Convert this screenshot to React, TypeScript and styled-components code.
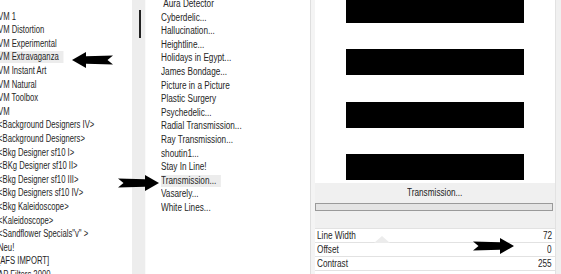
import React from 'react';
import styled, { createGlobalStyle } from 'styled-components';

const Global = createGlobalStyle`
  html, body { margin: 0; padding: 0; background: #fff; }
  body {
    width: 561px; height: 274px; overflow: hidden;
    font-family: "Liberation Sans", Arial, sans-serif;
  }
`;

const Screen = styled.div`
  position: relative;
  width: 561px;
  height: 274px;
  overflow: hidden;
  display: flex;
  font-size: 10px;
  color: #262626;
`;

const Narrow = styled.span<{ $origin?: string; $scale?: number }>`
  display: inline-block;
  white-space: nowrap;
  transform: scaleX(${(p) => p.$scale ?? 0.82});
  transform-origin: ${(p) => p.$origin || 'left'} center;
`;

const ListPane = styled.div<{ $w: number }>`
  width: ${(p) => p.$w}px;
  flex: none;
  background: #fff;
  overflow: hidden;
`;

const List = styled.div<{ $x: number; $y: number }>`
  display: flex;
  flex-direction: column;
  margin-left: ${(p) => p.$x}px;
  margin-top: ${(p) => p.$y}px;
`;

const Item = styled.div`
  height: 13.6px;
  display: flex;
  align-items: center;
  white-space: nowrap;
`;

const Label = styled(Narrow)<{ $sel?: boolean }>`
  line-height: 12px;
  padding-right: 6px;
  background: ${(p) => (p.$sel ? '#ececec' : 'transparent')};
`;

const Track = styled.div`
  width: 14px;
  flex: none;
  background: #ededed;
  display: flex;
  padding: 10px 0 0 7px;
  box-sizing: border-box;
  border-right: 1px solid #fafafa;
  margin-right: 2px;
`;

const Thumb = styled.div`
  width: 1.5px;
  height: 28px;
  background: #222;
`;

const Divider = styled.div`
  width: 4px;
  flex: none;
  background: #f4f4f4;
  border-left: 1px solid #dedede;
`;

const RightPanel = styled.div`
  width: 240px;
  flex: none;
  display: flex;
  flex-direction: column;
  background: #f0f0f0;
`;

const Preview = styled.div`
  height: 183px;
  flex: none;
  background: #fff;
  overflow: hidden;
  display: flex;
  justify-content: center;
`;

const Bars = styled.div`
  display: flex;
  flex-direction: column;
  gap: 26.6px;
  margin-top: -3.4px;
`;

const Bar = styled.div`
  width: 178px;
  height: 26px;
  flex: none;
  background: #000;
`;

const Title = styled.div`
  height: 18px;
  flex: none;
  display: flex;
  align-items: center;
  justify-content: center;
  color: #222;
`;

const Progress = styled.div`
  height: 6px;
  flex: none;
  margin: 2px 2px 0 0;
  border: 1px solid #9a9a9a;
  background: #e4e4e4;
`;

const Spacer = styled.div`
  height: 16.7px;
  flex: none;
`;

const Table = styled.div`
  position: relative;
  display: flex;
  flex-direction: column;
  background: #fff;
  flex: 1;
  min-height: 0;
  border-top: 1px solid #e2e2e2;
`;

const Row = styled.div`
  height: 14.2px;
  flex: none;
  display: flex;
  align-items: center;
  justify-content: space-between;
  padding: 0 3px 0 2px;
  border-bottom: 1px solid #e2e2e2;
  box-sizing: border-box;
`;

const Ghost = styled.div`
  position: absolute;
  left: 59px;
  top: 7px;
  width: 0;
  height: 0;
  border-left: 8px solid transparent;
  border-right: 8px solid transparent;
  border-bottom: 7px solid #ececec;
`;

const EdgeRight = styled.div`
  flex: 1;
  background: #f0f0f0;
  border-left: 1px solid #e2e2e2;
`;

const ArrowSvg = styled.svg<{ $x: number; $y: number; $flip?: boolean }>`
  position: absolute;
  left: ${(p) => p.$x}px;
  top: ${(p) => p.$y}px;
  width: 41px;
  height: 16px;
  transform: ${(p) => (p.$flip ? 'scaleX(-1)' : 'none')};
`;

const Arrow = ({ x, y, flip }: { x: number; y: number; flip?: boolean }) => (
  <ArrowSvg $x={x} $y={y} $flip={flip} viewBox="0 0 41 16">
    <path d="M0 3.6 L27 4.3 L27 0 L41 8 L27 16 L27 11.7 L0 12.4 L5.5 8 Z" fill="#000" />
  </ArrowSvg>
);

const leftItems = [
  '',
  'VM 1',
  'VM Distortion',
  'VM Experimental',
  'VM Extravaganza',
  'VM Instant Art',
  'VM Natural',
  'VM Toolbox',
  'VM',
  '<Background Designers IV>',
  '<Background Designers>',
  '<Bkg Designer sf10 I>',
  '<BKg Designer sf10 II>',
  '<Bkg Designer sf10 III>',
  '<Bkg Designers sf10 IV>',
  '<Bkg Kaleidoscope>',
  '<Kaleidoscope>',
  '<Sandflower Specials"v" >',
  'Neu!',
  '[AFS IMPORT]',
  'AP Filters 2000',
];

const midItems = [
  '\u00a0Aura Detector',
  'Cyberdelic...',
  'Hallucination...',
  'Heightline...',
  'Holidays in Egypt...',
  'James Bondage...',
  'Picture in a Picture',
  'Plastic Surgery',
  'Psychedelic...',
  'Radial Transmission...',
  'Ray Transmission...',
  'shoutin1...',
  'Stay In Line!',
  'Transmission...',
  'Vasarely...',
  'White Lines...',
];

const params = [
  ['Line Width', '72'],
  ['Offset', '0'],
  ['Contrast', '255'],
];

export default function App() {
  return (
    <>
      <Global />
      <Screen>
        <ListPane $w={132}>
          <List $x={-2} $y={-3.7}>
            {leftItems.map((t, i) => (
              <Item key={i}>
                <Label $scale={0.77} $sel={t === 'VM Extravaganza'}>
                  {t}
                </Label>
              </Item>
            ))}
          </List>
        </ListPane>
        <Track>
          <Thumb />
        </Track>
        <ListPane $w={162}>
          <List $x={13} $y={-2.8}>
            {midItems.map((t, i) => (
              <Item key={i}>
                <Label $sel={t === 'Transmission...'}>{t}</Label>
              </Item>
            ))}
          </List>
        </ListPane>
        <Divider />
        <RightPanel>
          <Preview>
            <Bars>
              <Bar />
              <Bar />
              <Bar />
              <Bar />
            </Bars>
          </Preview>
          <Title>
            <Narrow $origin="center">Transmission...</Narrow>
          </Title>
          <Progress />
          <Spacer />
          <Table>
            {params.map(([k, v]) => (
              <Row key={k}>
                <Narrow>{k}</Narrow>
                <Narrow $origin="right">{v}</Narrow>
              </Row>
            ))}
            <Ghost />
          </Table>
        </RightPanel>
        <EdgeRight />
        <Arrow x={72} y={51.5} flip />
        <Arrow x={118} y={174.5} />
        <Arrow x={473} y={238} />
      </Screen>
    </>
  );
}
